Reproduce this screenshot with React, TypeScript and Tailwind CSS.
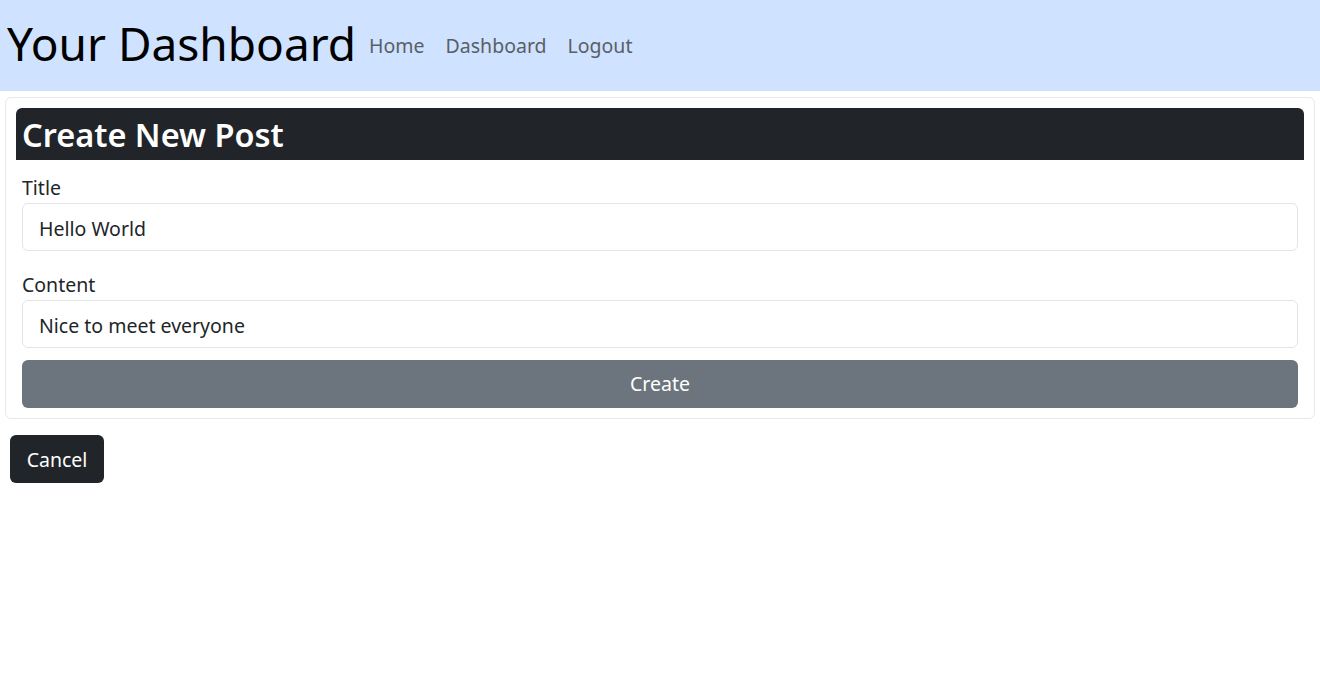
export default function App() {
  const font = { fontFamily: '"Noto Sans", "Open Sans", sans-serif' };
  return (
    <div style={font} className="min-h-[680px] bg-white text-[#212529]">
      <header className="flex h-[91px] items-center bg-[#cfe2ff] px-[7px]">
        <h1 className="mb-[5px] text-[46px] font-normal leading-none text-black">Your Dashboard</h1>
        <nav className="ml-[13px] mt-[1px] flex gap-[21px] text-[19.5px] text-[#595f65]">
          <a>Home</a>
          <a>Dashboard</a>
          <a>Logout</a>
        </nav>
      </header>
      <div className="mx-[5px] mt-[6px] rounded-[6px] border border-[#e6e8ea] p-[10px]">
        <div className="flex h-[52px] items-center rounded-t-[6px] bg-[#212529] px-[6px] pt-[3px]">
          <h2 className="text-[32.5px] font-semibold leading-none text-white">Create New Post</h2>
        </div>
        <form className="px-[6px]">
          <label className="mt-[15px] block text-[19.5px] leading-[26px]">Title</label>
          <div className="mt-[2px] flex h-[48px] items-center rounded-[6px] border border-[#e3e6e9] px-[16px] pt-[3px] text-[19.5px]">
            Hello World
          </div>
          <label className="mt-[21px] block text-[19.5px] leading-[26px]">Content</label>
          <div className="mt-[2px] flex h-[48px] items-center rounded-[6px] border border-[#e3e6e9] px-[16px] pt-[3px] text-[19.5px]">
            Nice to meet everyone
          </div>
          <div className="mt-[12px] flex h-[48px] items-center justify-center rounded-[6px] bg-[#6c757d] text-[19.5px] text-white">
            Create
          </div>
        </form>
      </div>
      <div className="ml-[10px] mt-[16px] flex h-[48px] w-[94px] items-center justify-center rounded-[6px] bg-[#212529] pt-[2px] text-[19.5px] text-white">
        Cancel
      </div>
    </div>
  );
}
